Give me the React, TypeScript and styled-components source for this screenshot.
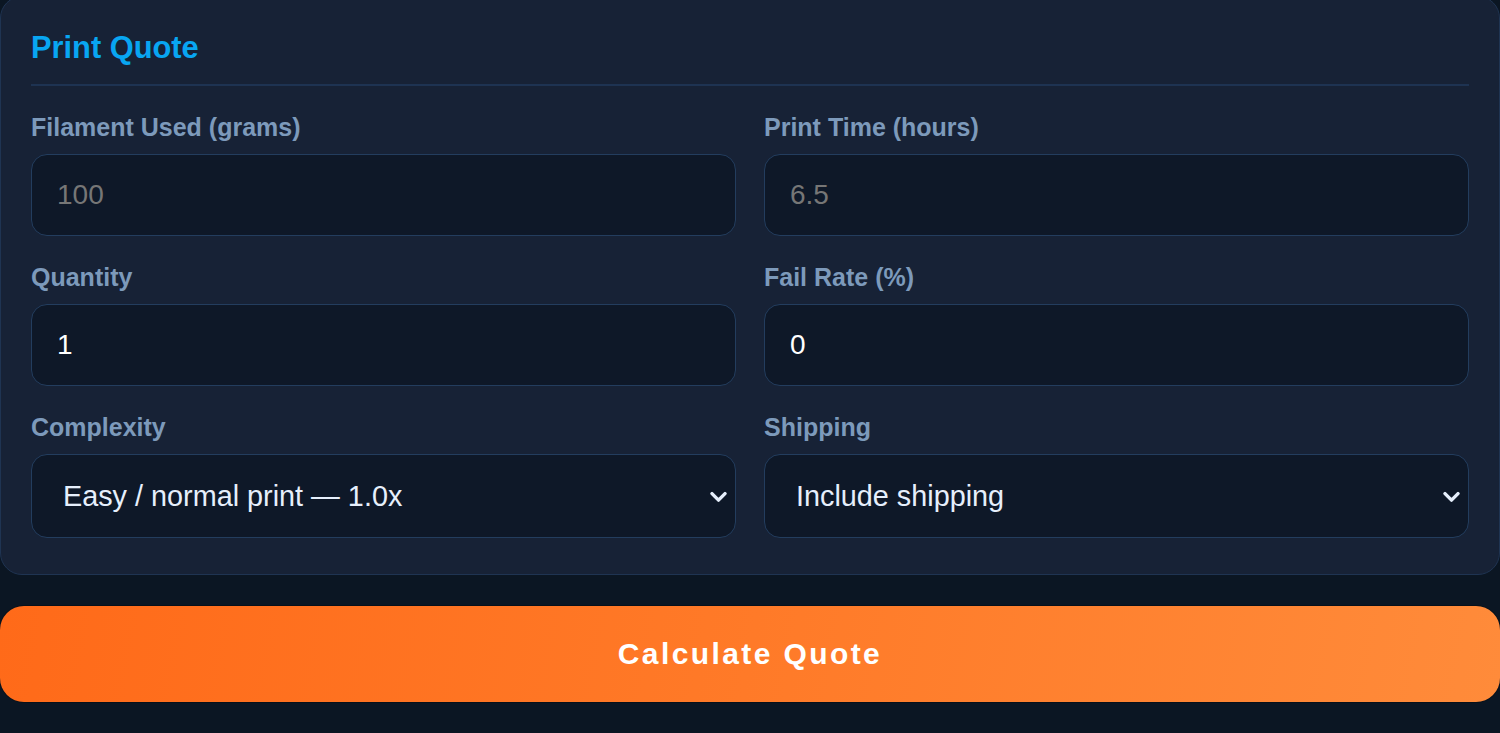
import React, {useState} from 'react';
import styled, {createGlobalStyle} from 'styled-components';

const GlobalStyle = createGlobalStyle`
  body {
    margin: 0;
    background-color: #0b1623;
    font-family: "Liberation Sans", Arial, Helvetica, sans-serif;
  }
`;

const Page = styled.div`
  height: 733px;
  overflow: hidden;
`;

const Card = styled.section`
  margin-top: -4px;
  padding: 33px 30px 36px;
  background-color: #172236;
  border: 1px solid #1f3452;
  border-radius: 22px;
`;

const Title = styled.h2`
  margin: 0;
  padding-bottom: 18px;
  border-bottom: 2px solid #1e3352;
  font-size: 30.8px;
  line-height: 36px;
  font-weight: 700;
  color: #08a6f2;
`;

const FieldGrid = styled.div`
  display: grid;
  grid-template-columns: 1fr 1fr;
  column-gap: 28px;
  row-gap: 26px;
  margin-top: 26px;
`;

const Field = styled.div`
  display: flex;
  flex-direction: column;
  gap: 12px;
  min-width: 0;
`;

const Label = styled.label`
  font-size: 25px;
  line-height: 30px;
  font-weight: 700;
  color: #7d9abb;
`;

const TextInput = styled.input`
  box-sizing: border-box;
  width: 100%;
  height: 82px;
  padding: 0 25px;
  background-color: #0e1828;
  border: 1px solid #233d5e;
  border-radius: 16px;
  font-family: inherit;
  font-size: 28px;
  color: #ffffff;
  outline: none;

  &::placeholder {
    color: #767676;
  }
`;

const SelectWrapper = styled.div`
  position: relative;
`;

const Select = styled.select`
  box-sizing: border-box;
  width: 100%;
  height: 84px;
  padding: 0 50px 0 31px;
  background-color: #0e1828;
  border: 1px solid #233d5e;
  border-radius: 16px;
  appearance: none;
  font-family: inherit;
  font-size: 28.8px;
  color: #e6effc;
  outline: none;
`;

const Chevron = styled.svg`
  position: absolute;
  top: 50%;
  right: 9px;
  width: 17px;
  height: 11px;
  transform: translateY(-40%);
  pointer-events: none;
`;

const SubmitButton = styled.button`
  display: block;
  width: 100%;
  height: 96px;
  margin-top: 31px;
  border: none;
  border-radius: 24px;
  background: linear-gradient(100deg, #ff6a19 0%, #ff7a28 50%, #ff8b3a 100%);
  box-shadow: 0 0 0 1px rgba(0, 0, 0, .25);
  font-family: inherit;
  font-size: 30px;
  font-weight: 700;
  letter-spacing: 2.4px;
  color: #ffffff;
  cursor: pointer;
`;

type SelectOption = {
  value: string
  name: string
}

type SelectFieldPropsType = {
  label: string
  value: string
  options: Array<SelectOption>
  onChange: (value: string) => void
}

const SelectField = ({label, value, options, onChange}: SelectFieldPropsType) => {
  return <Field>
    <Label>{label}</Label>
    <SelectWrapper>
      <Select value={value} onChange={e => onChange(e.target.value)}>
        {options.map(option => <option key={option.value} value={option.value}>{option.name}</option>)}
      </Select>
      <Chevron viewBox="0 0 17 11">
        <polyline points="2,2 8.5,8.5 15,2" fill="none" stroke="#e6effc" strokeWidth="3.4"
                  strokeLinecap="round" strokeLinejoin="round"/>
      </Chevron>
    </SelectWrapper>
  </Field>;
};

type InputFieldPropsType = {
  label: string
  value: string
  placeholder?: string
  onChange: (value: string) => void
}

const InputField = ({label, value, placeholder, onChange}: InputFieldPropsType) => {
  return <Field>
    <Label>{label}</Label>
    <TextInput type="number" placeholder={placeholder} value={value} onChange={e => onChange(e.target.value)}/>
  </Field>;
};

const complexityOptions = [
  {value: '1.0', name: 'Easy / normal print — 1.0x'},
  {value: '1.25', name: 'Moderate detail — 1.25x'},
  {value: '1.5', name: 'Complex / supports — 1.5x'},
];

const shippingOptions = [
  {value: 'include', name: 'Include shipping'},
  {value: 'pickup', name: 'Local pickup'},
];

export default function App() {
  const [filament, setFilament] = useState('');
  const [hours, setHours] = useState('');
  const [quantity, setQuantity] = useState('1');
  const [failRate, setFailRate] = useState('0');
  const [complexity, setComplexity] = useState('1.0');
  const [shipping, setShipping] = useState('include');

  return <Page>
    <GlobalStyle/>
    <Card>
      <Title>Print Quote</Title>
      <FieldGrid>
        <InputField label="Filament Used (grams)" placeholder="100" value={filament} onChange={setFilament}/>
        <InputField label="Print Time (hours)" placeholder="6.5" value={hours} onChange={setHours}/>
        <InputField label="Quantity" value={quantity} onChange={setQuantity}/>
        <InputField label="Fail Rate (%)" value={failRate} onChange={setFailRate}/>
        <SelectField label="Complexity" value={complexity} options={complexityOptions} onChange={setComplexity}/>
        <SelectField label="Shipping" value={shipping} options={shippingOptions} onChange={setShipping}/>
      </FieldGrid>
    </Card>
    <SubmitButton>Calculate Quote</SubmitButton>
  </Page>;
}
